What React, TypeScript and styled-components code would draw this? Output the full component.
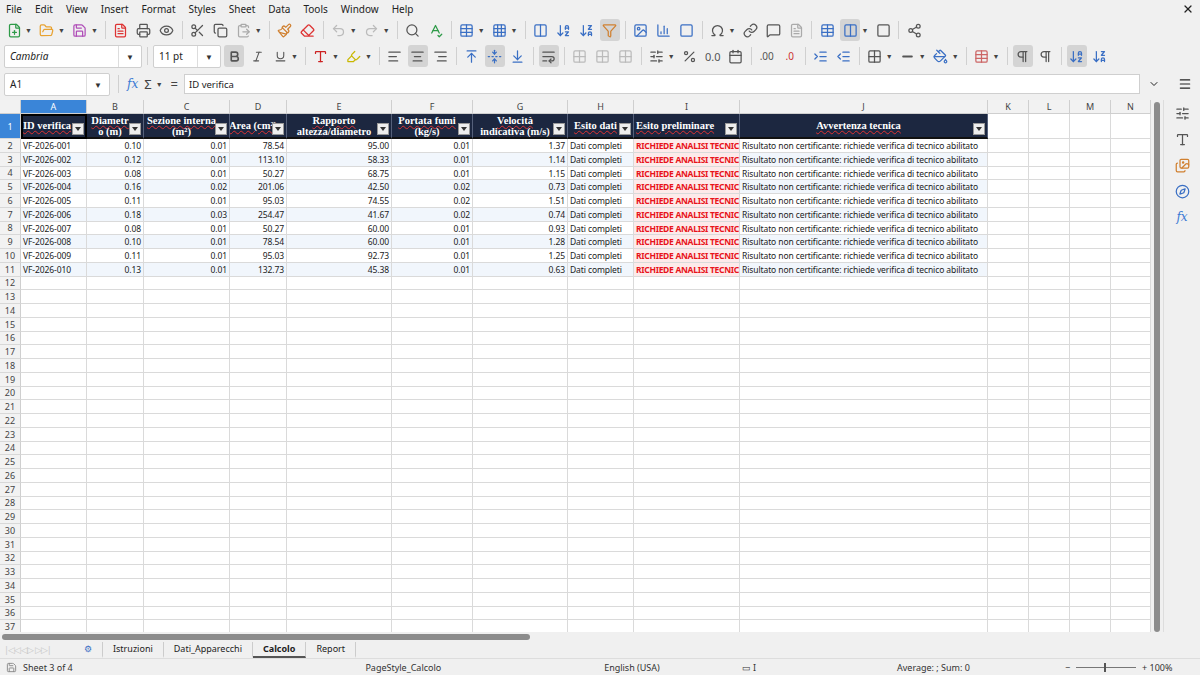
import React from 'react';
import styled, { createGlobalStyle } from 'styled-components';
import {
  FilePlus, FolderOpen, Save, FileText, Printer, Eye, Scissors, Copy, ClipboardPaste,
  Paintbrush, Eraser, Undo2, Redo2, Search, SpellCheck, Table, Grid3x3, ArrowDownAZ,
  ArrowDownZA, Filter, Image, BarChart3, Omega, Link, MessageSquare, Square, Columns,
  Share2, Bold, Italic, Underline, Type, Highlighter, AlignLeft, AlignCenter, AlignRight,
  ArrowUpToLine, FoldVertical, ArrowDownToLine, WrapText, Percent, Calendar, Indent,
  Outdent, Grid2x2, Minus, PaintBucket, Pilcrow, Menu, SlidersHorizontal,
  Images, Compass, X, ChevronDown,
} from 'lucide-react';

const Global = createGlobalStyle`
  html, body { margin: 0; padding: 0; }
  body { width: 1200px; height: 675px; overflow: hidden; background: #f0f0f0;
    font-family: "Noto Sans", "Open Sans", sans-serif; font-size: 10px; color: #222; }
`;

const Page = styled.div`
  width: 1200px; height: 675px; display: flex; flex-direction: column;
`;

const MenuBar = styled.div`
  height: 17px; display: flex; align-items: center; padding: 0 6px; gap: 13px;
  font-size: 10px;
`;

const CloseBtn = styled.div`
  margin-left: auto; display: flex; align-items: center;
`;

const ToolRow = styled.div`
  height: 26px; display: flex; align-items: center; padding: 0 4px; gap: 3px;
`;

const Tool = styled.div<{ $on?: boolean; $c?: string }>`
  width: 20px; height: 22px; display: flex; align-items: center; justify-content: center;
  border-radius: 3px; color: ${p => p.$c || '#555'};
  background: ${p => (p.$on ? '#d4d4d4' : 'transparent')};
`;

const Caret = styled.span`
  font-size: 7px; color: #444; margin: 0 2px 0 -2px;
`;

const Sep = styled.div`
  width: 1px; height: 18px; background: #d0d0d0; margin: 0 2px;
`;

const Combo = styled.div<{ $w: number }>`
  width: ${p => p.$w}px; height: 21px; background: #fff; border: 1px solid #cfcfcf;
  border-radius: 2px; display: flex; align-items: center; font-size: 10px; flex-shrink: 0;
`;

const ComboText = styled.span<{ $italic?: boolean }>`
  flex: 1; padding-left: 5px; font-style: ${p => (p.$italic ? 'italic' : 'normal')};
`;

const ComboBtn = styled.div`
  width: 22px; height: 100%; border-left: 1px solid #ddd; display: flex;
  align-items: center; justify-content: center; font-size: 8px; color: #333;
`;

const FormulaBar = styled.div`
  height: 24px; margin-top: 3px; display: flex; align-items: center; padding: 0 4px; gap: 6px;
`;

const FxText = styled.span`
  font-family: "DejaVu Serif", serif; font-style: italic; color: #3a7ad4; font-size: 12px;
`;

const FormulaInput = styled.div`
  flex: 1; height: 18px; background: #fff; border: 1px solid #cfcfcf; display: flex;
  align-items: center; padding-left: 4px; font-size: 9.5px;
`;

const FormulaEnd = styled.div`
  display: flex; align-items: center; gap: 18px; padding: 0 4px 0 2px;
`;

const Body = styled.div`
  flex: 1; display: flex; margin-top: 4px; min-height: 0;
`;

const SheetArea = styled.div`
  width: 1152px; background: #fff; display: flex; flex-direction: column; overflow: hidden;
`;

const VScroll = styled.div`
  width: 12px; background: #f0f0f0; display: flex; justify-content: center; padding-top: 2px;
`;

const VThumb = styled.div`
  width: 6px; height: 530px; border-radius: 3px; background: #8c8c8c;
`;

const Sidebar = styled.div`
  width: 36px; display: flex; flex-direction: column; align-items: center; gap: 11px;
  padding-top: 6px; border-left: 1px solid #ddd; color: #555;
`;

const cols = '21px 66px 57px 86px 57px 105px 81px 95px 66px 106px 248px 41px 41px 41px 40px';

const GridRow = styled.div<{ $h: number }>`
  display: grid; grid-template-columns: ${cols}; grid-template-rows: ${p => p.$h}px;
  height: ${p => p.$h}px; flex-shrink: 0;
`;

const ColHead = styled.div<{ $sel?: boolean }>`
  background: ${p => (p.$sel ? '#3a85d8' : '#f2f2f2')}; color: ${p => (p.$sel ? '#fff' : '#444')};
  border-right: 1px solid #cfcfcf; border-bottom: 1px solid #cfcfcf;
  display: flex; align-items: center; justify-content: center; font-size: 9px;
`;

const RowHead = styled.div<{ $sel?: boolean }>`
  background: ${p => (p.$sel ? '#3a85d8' : '#f2f2f2')}; color: ${p => (p.$sel ? '#fff' : '#444')};
  border-right: 1px solid #cfcfcf; border-bottom: 1px solid #d8d8d8;
  display: flex; align-items: center; justify-content: center; font-size: 9px;
`;

const HeadCell = styled.div<{ $left?: boolean; $sel?: boolean }>`
  position: relative; background: #1c2740; color: #fff; overflow: hidden;
  font-family: "Liberation Serif", "DejaVu Serif", serif; font-weight: bold; font-size: 10.5px;
  line-height: 11px; display: flex; align-items: center; white-space: nowrap;
  justify-content: ${p => (p.$left ? 'flex-start' : 'center')}; text-align: center;
  padding: 0 12px 0 2px; border-right: 1px solid #55607a; border-bottom: 2px solid #111;
  outline: ${p => (p.$sel ? '2px solid #000' : 'none')}; outline-offset: -2px;
  & span { text-decoration: underline wavy #d33; text-decoration-thickness: 1px; }
`;

const FilterBtn = styled.div`
  position: absolute; right: 2px; bottom: 2px; width: 10px; height: 10px; background: #eee;
  border: 1px solid #999; display: flex; align-items: center; justify-content: center;
  &::after { content: ''; border-left: 3px solid transparent; border-right: 3px solid transparent;
    border-top: 4px solid #333; }
`;

const Cell = styled.div<{ $num?: boolean; $alt?: boolean; $warn?: boolean }>`
  font-size: 8.5px; line-height: 13px; white-space: nowrap; overflow: hidden;
  padding: 0 2px; text-align: ${p => (p.$num ? 'right' : 'left')};
  background: ${p => (p.$warn ? '#fdeaea' : p.$alt ? '#f1f6fc' : '#fff')};
  color: ${p => (p.$warn ? '#e8141b' : '#222')}; font-weight: ${p => (p.$warn ? 700 : 400)};
  border-right: 1px solid #dadada; border-bottom: 1px solid #dadada;
  letter-spacing: ${p => (p.$warn ? '-0.3px' : '-0.1px')};
`;

const HScrollRow = styled.div`
  height: 9px; display: flex; align-items: center; padding: 0 2px; background: #f0f0f0;
`;

const HThumb = styled.div`
  width: 528px; height: 6px; border-radius: 3px; background: #8c8c8c;
`;

const TabBar = styled.div`
  height: 17px; display: flex; align-items: center; background: #f0f0f0; font-size: 9px;
  padding-left: 4px;
`;

const NavArrows = styled.div`
  width: 70px; color: #c8c8c8; font-size: 9px; letter-spacing: -1px;
`;

const Tab = styled.div<{ $active?: boolean }>`
  padding: 0 10px; height: 14px; display: flex; align-items: center; border-right: 1px solid #ccc;
  font-weight: ${p => (p.$active ? 700 : 400)};
  border-bottom: ${p => (p.$active ? '2px solid #555' : '2px solid transparent')};
`;

const StatusBar = styled.div`
  height: 16px; display: flex; align-items: center; font-size: 9px; background: #f0f0f0;
  border-top: 1px solid #ddd; color: #333;
`;

const StatusCell = styled.div<{ $w: number; $center?: boolean }>`
  width: ${p => p.$w}px; display: flex; align-items: center; gap: 6px;
  justify-content: ${p => (p.$center ? 'center' : 'flex-start')}; padding-left: 6px;
`;

const Slider = styled.div`
  width: 60px; height: 1px; background: #777; position: relative;
  &::after { content: ''; position: absolute; left: 28px; top: -4px; width: 2px; height: 9px; background: #555; }
`;

const data: [string, string, string, string, string, string, string][] = [
  ['VF-2026-001', '0.10', '0.01', '78.54', '95.00', '0.01', '1.37'],
  ['VF-2026-002', '0.12', '0.01', '113.10', '58.33', '0.01', '1.14'],
  ['VF-2026-003', '0.08', '0.01', '50.27', '68.75', '0.01', '1.15'],
  ['VF-2026-004', '0.16', '0.02', '201.06', '42.50', '0.02', '0.73'],
  ['VF-2026-005', '0.11', '0.01', '95.03', '74.55', '0.02', '1.51'],
  ['VF-2026-006', '0.18', '0.03', '254.47', '41.67', '0.02', '0.74'],
  ['VF-2026-007', '0.08', '0.01', '50.27', '60.00', '0.01', '0.93'],
  ['VF-2026-008', '0.10', '0.01', '78.54', '60.00', '0.01', '1.28'],
  ['VF-2026-009', '0.11', '0.01', '95.03', '92.73', '0.01', '1.25'],
  ['VF-2026-010', '0.13', '0.01', '132.73', '45.38', '0.01', '0.63'],
];

const letters = ['A', 'B', 'C', 'D', 'E', 'F', 'G', 'H', 'I', 'J', 'K', 'L', 'M', 'N'];
const heads: [React.ReactNode, boolean?][] = [
  ['ID verifica', true], [<>Diametr<br />o (m)</>], [<>Sezione interna<br />(m²)</>],
  ['Area (cm²)'], [<>Rapporto<br />altezza/diametro</>], [<>Portata fumi<br />(kg/s)</>],
  [<>Velocità<br />indicativa (m/s)</>], ['Esito dati'], ['Esito preliminare', true],
  ['Avvertenza tecnica'],
];

const s = 15;

export default function App() {
  return (
    <Page>
      <Global />
      <MenuBar>
        {['File', 'Edit', 'View', 'Insert', 'Format', 'Styles', 'Sheet', 'Data', 'Tools', 'Window', 'Help'].map(m => (
          <span key={m}>{m}</span>
        ))}
        <CloseBtn><X size={12} strokeWidth={2.5} /></CloseBtn>
      </MenuBar>
      <ToolRow>
        <Tool $c="#2e9a48"><FilePlus size={s} /></Tool><Caret>▼</Caret>
        <Tool $c="#e8a230"><FolderOpen size={s} /></Tool><Caret>▼</Caret>
        <Tool $c="#b04fb8"><Save size={s} /></Tool><Caret>▼</Caret>
        <Sep />
        <Tool $c="#d33"><FileText size={s} /></Tool>
        <Tool><Printer size={s} /></Tool>
        <Tool><Eye size={s} /></Tool>
        <Sep />
        <Tool><Scissors size={s} /></Tool>
        <Tool><Copy size={s} /></Tool>
        <Tool $c="#aaa"><ClipboardPaste size={s} /></Tool><Caret>▼</Caret>
        <Sep />
        <Tool $c="#d08030"><Paintbrush size={s} /></Tool>
        <Tool $c="#d33"><Eraser size={s} /></Tool>
        <Sep />
        <Tool $c="#bbb"><Undo2 size={s} /></Tool><Caret>▼</Caret>
        <Tool $c="#bbb"><Redo2 size={s} /></Tool><Caret>▼</Caret>
        <Sep />
        <Tool><Search size={s} /></Tool>
        <Tool $c="#2e9a48"><SpellCheck size={s} /></Tool>
        <Sep />
        <Tool $c="#3a6fc4"><Table size={s} /></Tool><Caret>▼</Caret>
        <Tool $c="#3a6fc4"><Grid3x3 size={s} /></Tool><Caret>▼</Caret>
        <Sep />
        <Tool $c="#3a6fc4"><Columns size={s} /></Tool>
        <Tool $c="#3a6fc4"><ArrowDownAZ size={s} /></Tool>
        <Tool $c="#3a6fc4"><ArrowDownZA size={s} /></Tool>
        <Tool $on $c="#d08030"><Filter size={s} /></Tool>
        <Sep />
        <Tool $c="#3a6fc4"><Image size={s} /></Tool>
        <Tool $c="#3a6fc4"><BarChart3 size={s} /></Tool>
        <Tool $c="#3a6fc4"><Square size={s} /></Tool>
        <Sep />
        <Tool><Omega size={s} /></Tool><Caret>▼</Caret>
        <Tool><Link size={s} /></Tool>
        <Tool><MessageSquare size={s} /></Tool>
        <Tool $c="#aaa"><FileText size={s} /></Tool>
        <Sep />
        <Tool $c="#3a6fc4"><Table size={s} /></Tool>
        <Tool $on $c="#3a6fc4"><Columns size={s} /></Tool><Caret>▼</Caret>
        <Tool><Square size={s} /></Tool>
        <Sep />
        <Tool><Share2 size={s} /></Tool>
      </ToolRow>
      <ToolRow>
        <Combo $w={136}><ComboText $italic>Cambria</ComboText><ComboBtn>▼</ComboBtn></Combo>
        <Sep />
        <Combo $w={66}><ComboText>11 pt</ComboText><ComboBtn>▼</ComboBtn></Combo>
        <Tool $on><Bold size={13} strokeWidth={3} /></Tool>
        <Tool><Italic size={13} /></Tool>
        <Tool><Underline size={13} /></Tool><Caret>▼</Caret>
        <Sep />
        <Tool $c="#c22"><Type size={s} /></Tool><Caret>▼</Caret>
        <Tool $c="#c9b800"><Highlighter size={s} /></Tool><Caret>▼</Caret>
        <Sep />
        <Tool><AlignLeft size={s} /></Tool>
        <Tool $on><AlignCenter size={s} /></Tool>
        <Tool><AlignRight size={s} /></Tool>
        <Sep />
        <Tool $c="#3a6fc4"><ArrowUpToLine size={s} /></Tool>
        <Tool $on $c="#3a6fc4"><FoldVertical size={s} /></Tool>
        <Tool $c="#3a6fc4"><ArrowDownToLine size={s} /></Tool>
        <Sep />
        <Tool $on><WrapText size={s} /></Tool>
        <Sep />
        <Tool $c="#bbb"><Grid2x2 size={s} /></Tool>
        <Tool $c="#bbb"><Grid2x2 size={s} /></Tool>
        <Tool $c="#bbb"><Grid2x2 size={s} /></Tool>
        <Sep />
        <Tool><SlidersHorizontal size={s} /></Tool><Caret>▼</Caret>
        <Tool><Percent size={s} /></Tool>
        <Tool><span style={{ fontSize: 11 }}>0.0</span></Tool>
        <Tool><Calendar size={s} /></Tool>
        <Sep />
        <Tool><span style={{ fontSize: 10 }}>.00</span></Tool>
        <Tool><span style={{ fontSize: 10, color: '#c33' }}>.0</span></Tool>
        <Sep />
        <Tool $c="#3a6fc4"><Indent size={s} /></Tool>
        <Tool $c="#3a6fc4"><Outdent size={s} /></Tool>
        <Sep />
        <Tool><Grid2x2 size={s} /></Tool><Caret>▼</Caret>
        <Tool><Minus size={s} strokeWidth={3} /></Tool><Caret>▼</Caret>
        <Tool $c="#3a6fc4"><PaintBucket size={s} /></Tool><Caret>▼</Caret>
        <Sep />
        <Tool $c="#c66"><Table size={s} /></Tool><Caret>▼</Caret>
        <Sep />
        <Tool $on><Pilcrow size={s} /></Tool>
        <Tool><Pilcrow size={s} /></Tool>
        <Sep />
        <Tool $on $c="#3a6fc4"><ArrowDownAZ size={s} /></Tool>
        <Tool $c="#3a6fc4"><ArrowDownZA size={s} /></Tool>
      </ToolRow>
      <FormulaBar>
        <Combo $w={104}><ComboText>A1</ComboText><ComboBtn>▼</ComboBtn></Combo>
        <Sep />
        <FxText>fx</FxText>
        <span style={{ fontSize: 13, color: '#444' }}>Σ</span><Caret>▼</Caret>
        <span style={{ fontSize: 13, color: '#444' }}>=</span>
        <FormulaInput>ID verifica</FormulaInput>
        <FormulaEnd>
          <ChevronDown size={12} />
          <Menu size={14} />
        </FormulaEnd>
      </FormulaBar>
      <Body>
        <SheetArea>
          <GridRow $h={14}>
            <ColHead />
            {letters.map((l, i) => <ColHead key={l} $sel={i === 0}>{l}</ColHead>)}
          </GridRow>
          <GridRow $h={25}>
            <RowHead $sel>1</RowHead>
            {heads.map(([h, left], i) => (
              <HeadCell key={i} $left={left} $sel={i === 0}>
                <span>{h}</span>
                <FilterBtn />
              </HeadCell>
            ))}
            <Cell /><Cell /><Cell /><Cell />
          </GridRow>
          {Array.from({ length: 36 }, (_, r) => {
            const d = data[r];
            const alt = r % 2 === 1 && !!d;
            return (
              <GridRow key={r} $h={13.75}>
                <RowHead>{r + 2}</RowHead>
                {d ? (
                  <>
                    <Cell $alt={alt}>{d[0]}</Cell>
                    {d.slice(1).map((v, i) => <Cell key={i} $num $alt={alt}>{v}</Cell>)}
                    <Cell $alt={alt}>Dati completi</Cell>
                    <Cell $warn>RICHIEDE ANALISI TECNICA</Cell>
                    <Cell $alt={alt}>Risultato non certificante: richiede verifica di tecnico abilitato</Cell>
                  </>
                ) : (
                  Array.from({ length: 10 }, (_, i) => <Cell key={i} />)
                )}
                <Cell /><Cell /><Cell /><Cell />
              </GridRow>
            );
          })}
        </SheetArea>
        <VScroll><VThumb /></VScroll>
        <Sidebar>
          <SlidersHorizontal size={15} />
          <Type size={15} />
          <Images size={15} color="#d08030" />
          <Compass size={15} color="#3a6fc4" />
          <FxText>fx</FxText>
        </Sidebar>
      </Body>
      <HScrollRow><HThumb /></HScrollRow>
      <TabBar>
        <NavArrows>|◁◁ ◁▷ ▷▷|</NavArrows>
        <Tab style={{ color: '#3a6fc4' }}>⚙</Tab>
        <Tab>Istruzioni</Tab>
        <Tab>Dati_Apparecchi</Tab>
        <Tab $active>Calcolo</Tab>
        <Tab>Report</Tab>
      </TabBar>
      <StatusBar>
        <StatusCell $w={190}><Save size={11} color="#888" />Sheet 3 of 4</StatusCell>
        <StatusCell $w={170} />
        <StatusCell $w={210}>PageStyle_Calcolo</StatusCell>
        <StatusCell $w={120} $center>English (USA)</StatusCell>
        <StatusCell $w={110} $center>▭ I</StatusCell>
        <StatusCell $w={260} $center>Average: ; Sum: 0</StatusCell>
        <StatusCell $w={140}>−<Slider />+ 100%</StatusCell>
      </StatusBar>
    </Page>
  );
}
